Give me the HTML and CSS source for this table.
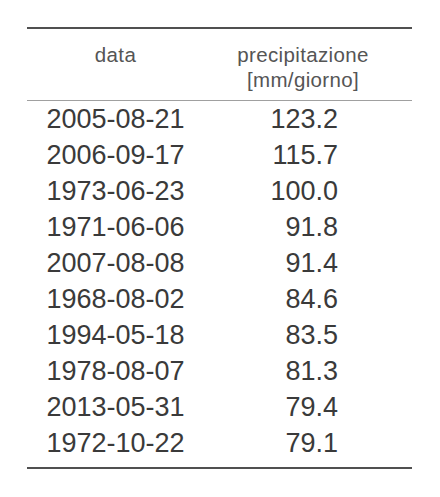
FILE: index.html
```html
<!DOCTYPE html>
<html lang="it">
<head>
<meta charset="utf-8">
<title>Precipitazioni</title>
<link rel="stylesheet" href="styles.css">
</head>
<body>
<table class="booktab">
  <colgroup>
    <col class="col-date">
    <col class="col-val">
  </colgroup>
  <thead>
    <tr>
      <th class="h-date">data</th>
      <th class="h-val">precipitazione<br>[mm/giorno]</th>
    </tr>
  </thead>
  <tbody>
    <tr><td class="c-date">2005-08-21</td><td class="c-val">123.2</td></tr>
    <tr><td class="c-date">2006-09-17</td><td class="c-val">115.7</td></tr>
    <tr><td class="c-date">1973-06-23</td><td class="c-val">100.0</td></tr>
    <tr><td class="c-date">1971-06-06</td><td class="c-val">91.8</td></tr>
    <tr><td class="c-date">2007-08-08</td><td class="c-val">91.4</td></tr>
    <tr><td class="c-date">1968-08-02</td><td class="c-val">84.6</td></tr>
    <tr><td class="c-date">1994-05-18</td><td class="c-val">83.5</td></tr>
    <tr><td class="c-date">1978-08-07</td><td class="c-val">81.3</td></tr>
    <tr><td class="c-date">2013-05-31</td><td class="c-val">79.4</td></tr>
    <tr class="last"><td class="c-date">1972-10-22</td><td class="c-val">79.1</td></tr>
  </tbody>
</table>
</body>
</html>
```

FILE: styles.css
```css
html, body {
  margin: 0;
  padding: 0;
  background: #ffffff;
}

body {
  padding-top: 27px;
  font-family: "Liberation Sans", Arial, sans-serif;
}

.booktab {
  margin-left: 27px;
  width: 385px;
  table-layout: fixed;
  border-collapse: separate;
  border-spacing: 0;
}

.col-date {
  width: 177px;
}

.col-val {
  width: 208px;
}

.booktab th {
  font-weight: normal;
  font-size: 20.5px;
  letter-spacing: 0.35px;
  line-height: 25px;
  color: #555555;
  text-align: center;
  vertical-align: top;
  padding: 13px 0 8px 0;
  border-top: 2px solid #505050;
  border-bottom: 1px solid #a0a0a0;
}

.booktab .h-val {
  padding-right: 10px;
}

.booktab td {
  font-size: 27px;
  line-height: 36px;
  color: #3a3a3a;
  padding: 0;
}

.c-date {
  text-align: center;
}

.c-val {
  text-align: right;
  padding-right: 74px !important;
}

.booktab tr.last td {
  padding-bottom: 6px;
  border-bottom: 2px solid #505050;
}
```
